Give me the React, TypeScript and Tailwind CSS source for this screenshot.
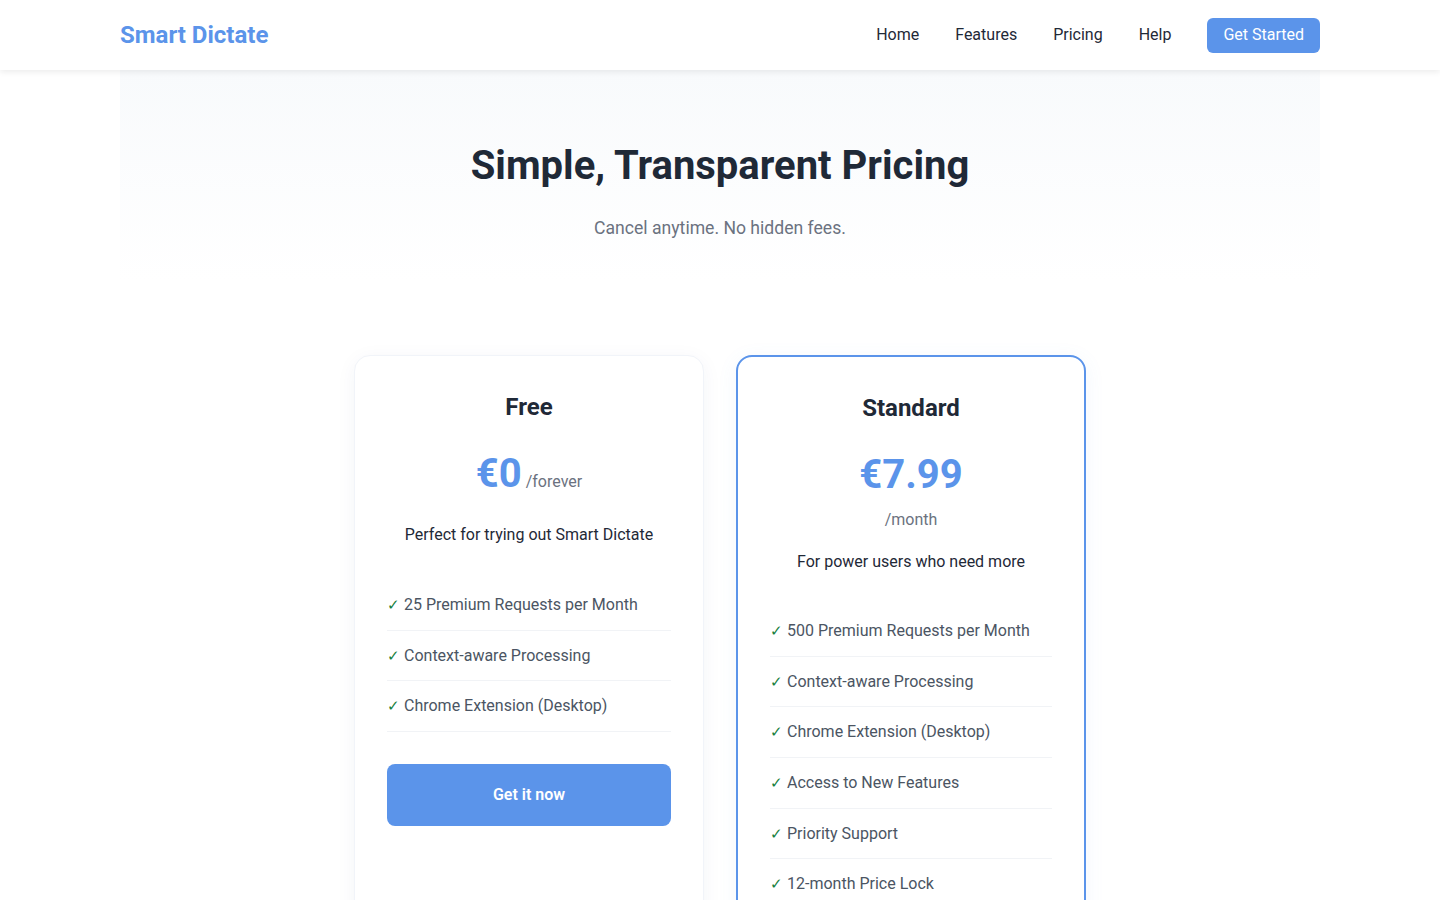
import React from "react";

const FONT = { fontFamily: "Roboto, 'Noto Sans', sans-serif" };

const PLANS = [
  {
    name: "Free",
    price: "€0",
    period: "/forever",
    inline: true,
    desc: "Perfect for trying out Smart Dictate",
    features: ["25 Premium Requests per Month", "Context-aware Processing", "Chrome Extension (Desktop)"],
    cta: "Get it now",
    featured: false,
  },
  {
    name: "Standard",
    price: "€7.99",
    period: "/month",
    inline: false,
    desc: "For power users who need more",
    features: [
      "500 Premium Requests per Month",
      "Context-aware Processing",
      "Chrome Extension (Desktop)",
      "Access to New Features",
      "Priority Support",
      "12-month Price Lock",
    ],
    cta: "Subscribe now",
    featured: true,
  },
];

function Header() {
  return (
    <header className="bg-white shadow-[0_2px_6px_rgba(0,0,0,0.08)] relative z-10">
      <div className="max-w-[1200px] mx-auto h-[70px] flex items-center justify-between">
        <div className="text-2xl font-bold text-[#5b94ea]">Smart Dictate</div>
        <nav className="flex items-center gap-9 text-base text-[#1f2937]">
          <a>Home</a>
          <a>Features</a>
          <a>Pricing</a>
          <a>Help</a>
          <a className="bg-[#5b94ea] text-white rounded-md px-4 py-[5.5px] leading-6">Get Started</a>
        </nav>
      </div>
    </header>
  );
}

function PlanCard({ plan }: { plan: (typeof PLANS)[number] }) {
  return (
    <div
      className={`rounded-2xl bg-white px-8 pt-[37px] pb-10 flex flex-col ${
        plan.featured
          ? "border-2 border-[#5b94ea] shadow-[0_4px_20px_rgba(91,148,234,0.08)]"
          : "border border-[#f1f4f9] shadow-[0_4px_20px_rgba(30,60,120,0.05)]"
      }`}
    >
      <h3 className="text-2xl font-bold leading-[1.2] text-[#1f2937] text-center">{plan.name}</h3>
      {plan.inline ? (
        <div className="mt-7 mb-[25px] text-center">
          <span className="text-[40px] font-bold leading-[1.2] text-[#5b94ea]">{plan.price}</span>
          <span className="text-base text-[#6b7280] ml-1">{plan.period}</span>
        </div>
      ) : (
        <div className="mt-7 mb-[18px] text-center">
          <div className="text-[40px] font-bold leading-[1.2] text-[#5b94ea]">{plan.price}</div>
          <div className="text-base leading-6 text-[#6b7280] mt-[9px]">{plan.period}</div>
        </div>
      )}
      <p className={`text-base leading-6 text-[#1f2937] text-center ${plan.inline ? "mb-[33px]" : "mb-8"}`}>
        {plan.desc}
      </p>
      <ul className="flex flex-col">
        {plan.features.map((f) => (
          <li key={f} className="py-3 leading-[1.6] text-base text-[#4b5563] border-b border-[#f1f3f6]">
            <span className="text-[#15803d] text-[15px] mr-1">✓</span>
            {f}
          </li>
        ))}
      </ul>
      <button className="mt-8 w-full rounded-lg bg-[#5b94ea] text-white font-semibold text-base leading-6 py-[19px]">
        {plan.cta}
      </button>
    </div>
  );
}

export default function App() {
  return (
    <div className="min-h-screen bg-white" style={FONT}>
      <Header />
      <section className="max-w-[1200px] mx-auto bg-gradient-to-b from-[#f8fafc] to-white pt-[72px] pb-10 text-center">
        <h1 className="text-[40px] font-bold leading-[1.2] text-[#1f2937]">Simple, Transparent Pricing</h1>
        <p className="mt-[25px] text-[17.6px] leading-[1.5] text-[#6b7280]">Cancel anytime. No hidden fees.</p>
      </section>
      <section className="mt-[74px] pb-20 grid grid-cols-[350px_350px] gap-8 justify-center">
        {PLANS.map((p) => (
          <PlanCard key={p.name} plan={p} />
        ))}
      </section>
    </div>
  );
}
